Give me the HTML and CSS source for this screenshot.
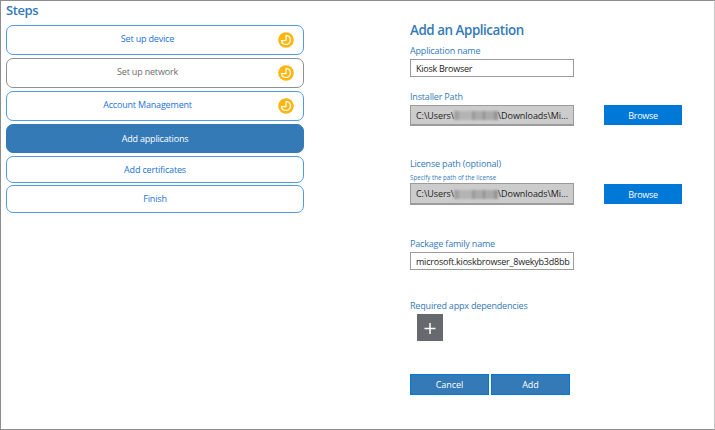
FILE: index.html
```html
<!DOCTYPE html>
<html lang="en">
<head>
<meta charset="utf-8">
<title>Add an Application</title>
<link rel="stylesheet" href="styles.css">
</head>
<body>
<main class="window">
  <nav class="steps">
    <h2 class="steps-title">Steps</h2>
    <a class="step checked"><span>Set up device</span>
      <svg class="clock" viewBox="0 0 16 16"><circle cx="8" cy="8" r="7.8"/><path d="M8 3.6H9A4.5 4.5 0 1 1 3.4 8.6H8Z"/></svg></a>
    <a class="step checked muted"><span>Set up network</span>
      <svg class="clock" viewBox="0 0 16 16"><circle cx="8" cy="8" r="7.8"/><path d="M8 3.6H9A4.5 4.5 0 1 1 3.4 8.6H8Z"/></svg></a>
    <a class="step checked"><span>Account Management</span>
      <svg class="clock" viewBox="0 0 16 16"><circle cx="8" cy="8" r="7.8"/><path d="M8 3.6H9A4.5 4.5 0 1 1 3.4 8.6H8Z"/></svg></a>
    <a class="step active"><span>Add applications</span></a>
    <a class="step short"><span>Add certificates</span></a>
    <a class="step short last"><span>Finish</span></a>
  </nav>
  <section class="form">
    <h1 class="title">Add an Application</h1>
    <div class="field name">
      <div class="label">Application name</div>
      <div class="input">Kiosk Browser</div>
    </div>
    <div class="field installer">
      <div class="label">Installer Path</div>
      <div class="row">
        <div class="input path"><span>C:\Users\</span><span class="redacted"></span><span>\Downloads\Mi...</span></div>
        <div class="browse">Browse</div>
      </div>
    </div>
    <div class="field license">
      <div class="label">License path (optional)</div>
      <div class="hint">Specify the path of the license</div>
      <div class="row">
        <div class="input path tall"><span>C:\Users\</span><span class="redacted"></span><span>\Downloads\Mi...</span></div>
        <div class="browse">Browse</div>
      </div>
    </div>
    <div class="field package">
      <div class="label">Package family name</div>
      <div class="input"><span class="family">microsoft.kioskbrowser_8wekyb3d8bb</span></div>
    </div>
    <div class="field deps">
      <div class="label">Required appx dependencies</div>
      <div class="plus"><svg viewBox="0 0 26 27"><path d="M7.5 14.5H18.5M13 9V20"/></svg></div>
    </div>
    <div class="actions"><div class="action">Cancel</div><div class="action">Add</div></div>
  </section>
</main>
</body>
</html>
```
FILE: styles.css
```css
* { box-sizing: border-box; }
body { margin: 0; background: #fff; font: 9px/12px "Open Sans", "Noto Sans", sans-serif; letter-spacing: -0.18px; }
h1, h2 { margin: 0; font-weight: 600; color: #337ab7; letter-spacing: -0.45px; }
.window {
  display: grid; grid-template-columns: 298px 1fr; column-gap: 106px;
  width: 715px; height: 430px; padding-left: 5px;
  border: 1px solid #8d8d8d; border-right-color: #c8c8c8;
}
.steps { display: flex; flex-direction: column; }
.steps-title { height: 24px; padding-top: 1px; font-size: 13px; line-height: 17px; letter-spacing: -0.4px; }
.step {
  position: relative; display: flex; align-items: center; justify-content: center;
  height: 30px; margin-bottom: 3px; padding-bottom: 2px;
  border: 1px solid #519ae6; border-radius: 7px; color: #1c73d8; white-space: nowrap;
}
.checked { padding-right: 15px; }
.muted { border-color: #8f8f8f; color: #6c6c6c; }
.active { height: 29px; padding-bottom: 0; background: #337ab7; border-color: #337ab7; color: #fff; }
.short { height: 27px; padding-bottom: 0; }
.last { margin-top: -1px; height: 28px; }
.clock { position: absolute; right: 9px; top: 6px; width: 16px; height: 16px; }
.clock circle { fill: #ffb60e; }
.clock path { fill: none; stroke: #fff; stroke-width: 1.2; stroke-linejoin: round; }
.form { display: flex; flex-direction: column; color: #222; }
.title { height: 44px; padding-top: 20px; font-size: 13.4px; line-height: 18px; white-space: nowrap; }
.label { height: 14px; color: #337ab7; white-space: nowrap; }
.hint { height: 11px; font-size: 6.2px; line-height: 12px; letter-spacing: 0; color: #337ab7; }
.input {
  display: flex; align-items: center; width: 164px; height: 18px; padding: 1px 5px 0;
  border: 1px solid #9b9b9b; white-space: nowrap; letter-spacing: -0.25px;
}
.family { width: 154px; letter-spacing: -0.22px; }
.row { display: flex; align-items: flex-start; gap: 30px; }
.path { height: 21px; padding-top: 1px; background: #ccc; border-bottom-width: 2px; letter-spacing: -0.05px; }
.tall { height: 22px; }
.redacted {
  width: 46px; height: 9px; filter: blur(1px);
  background: linear-gradient(90deg, #a0a0a0 0 5px, #b4b4b4 5px 18px, #999 18px 21px, #aaa 21px 29px, #919191 29px 31px, #aaa 31px 40px, #949494 40px);
}
.browse { width: 78px; height: 20px; background: #0078d7; color: #fff; text-align: center; line-height: 21px; letter-spacing: -0.3px; }
.license .browse { margin-top: 1px; }
.name { height: 46px; }
.installer { height: 67px; }
.license { height: 80px; }
.package { height: 63px; }
.deps { height: 73px; }
.deps .label { height: 13px; line-height: 10px; }
.plus { width: 26px; height: 27px; margin-left: 7px; background: #666a6e; }
.plus svg { display: block; }
.plus path { fill: none; stroke: #fff; stroke-width: 1.5; }
.actions { display: flex; gap: 2px; }
.action { width: 79px; height: 21px; border: 1px solid #0078d7; background: #337ab7; color: #fff; text-align: center; line-height: 20px; letter-spacing: -0.05px; }
```
